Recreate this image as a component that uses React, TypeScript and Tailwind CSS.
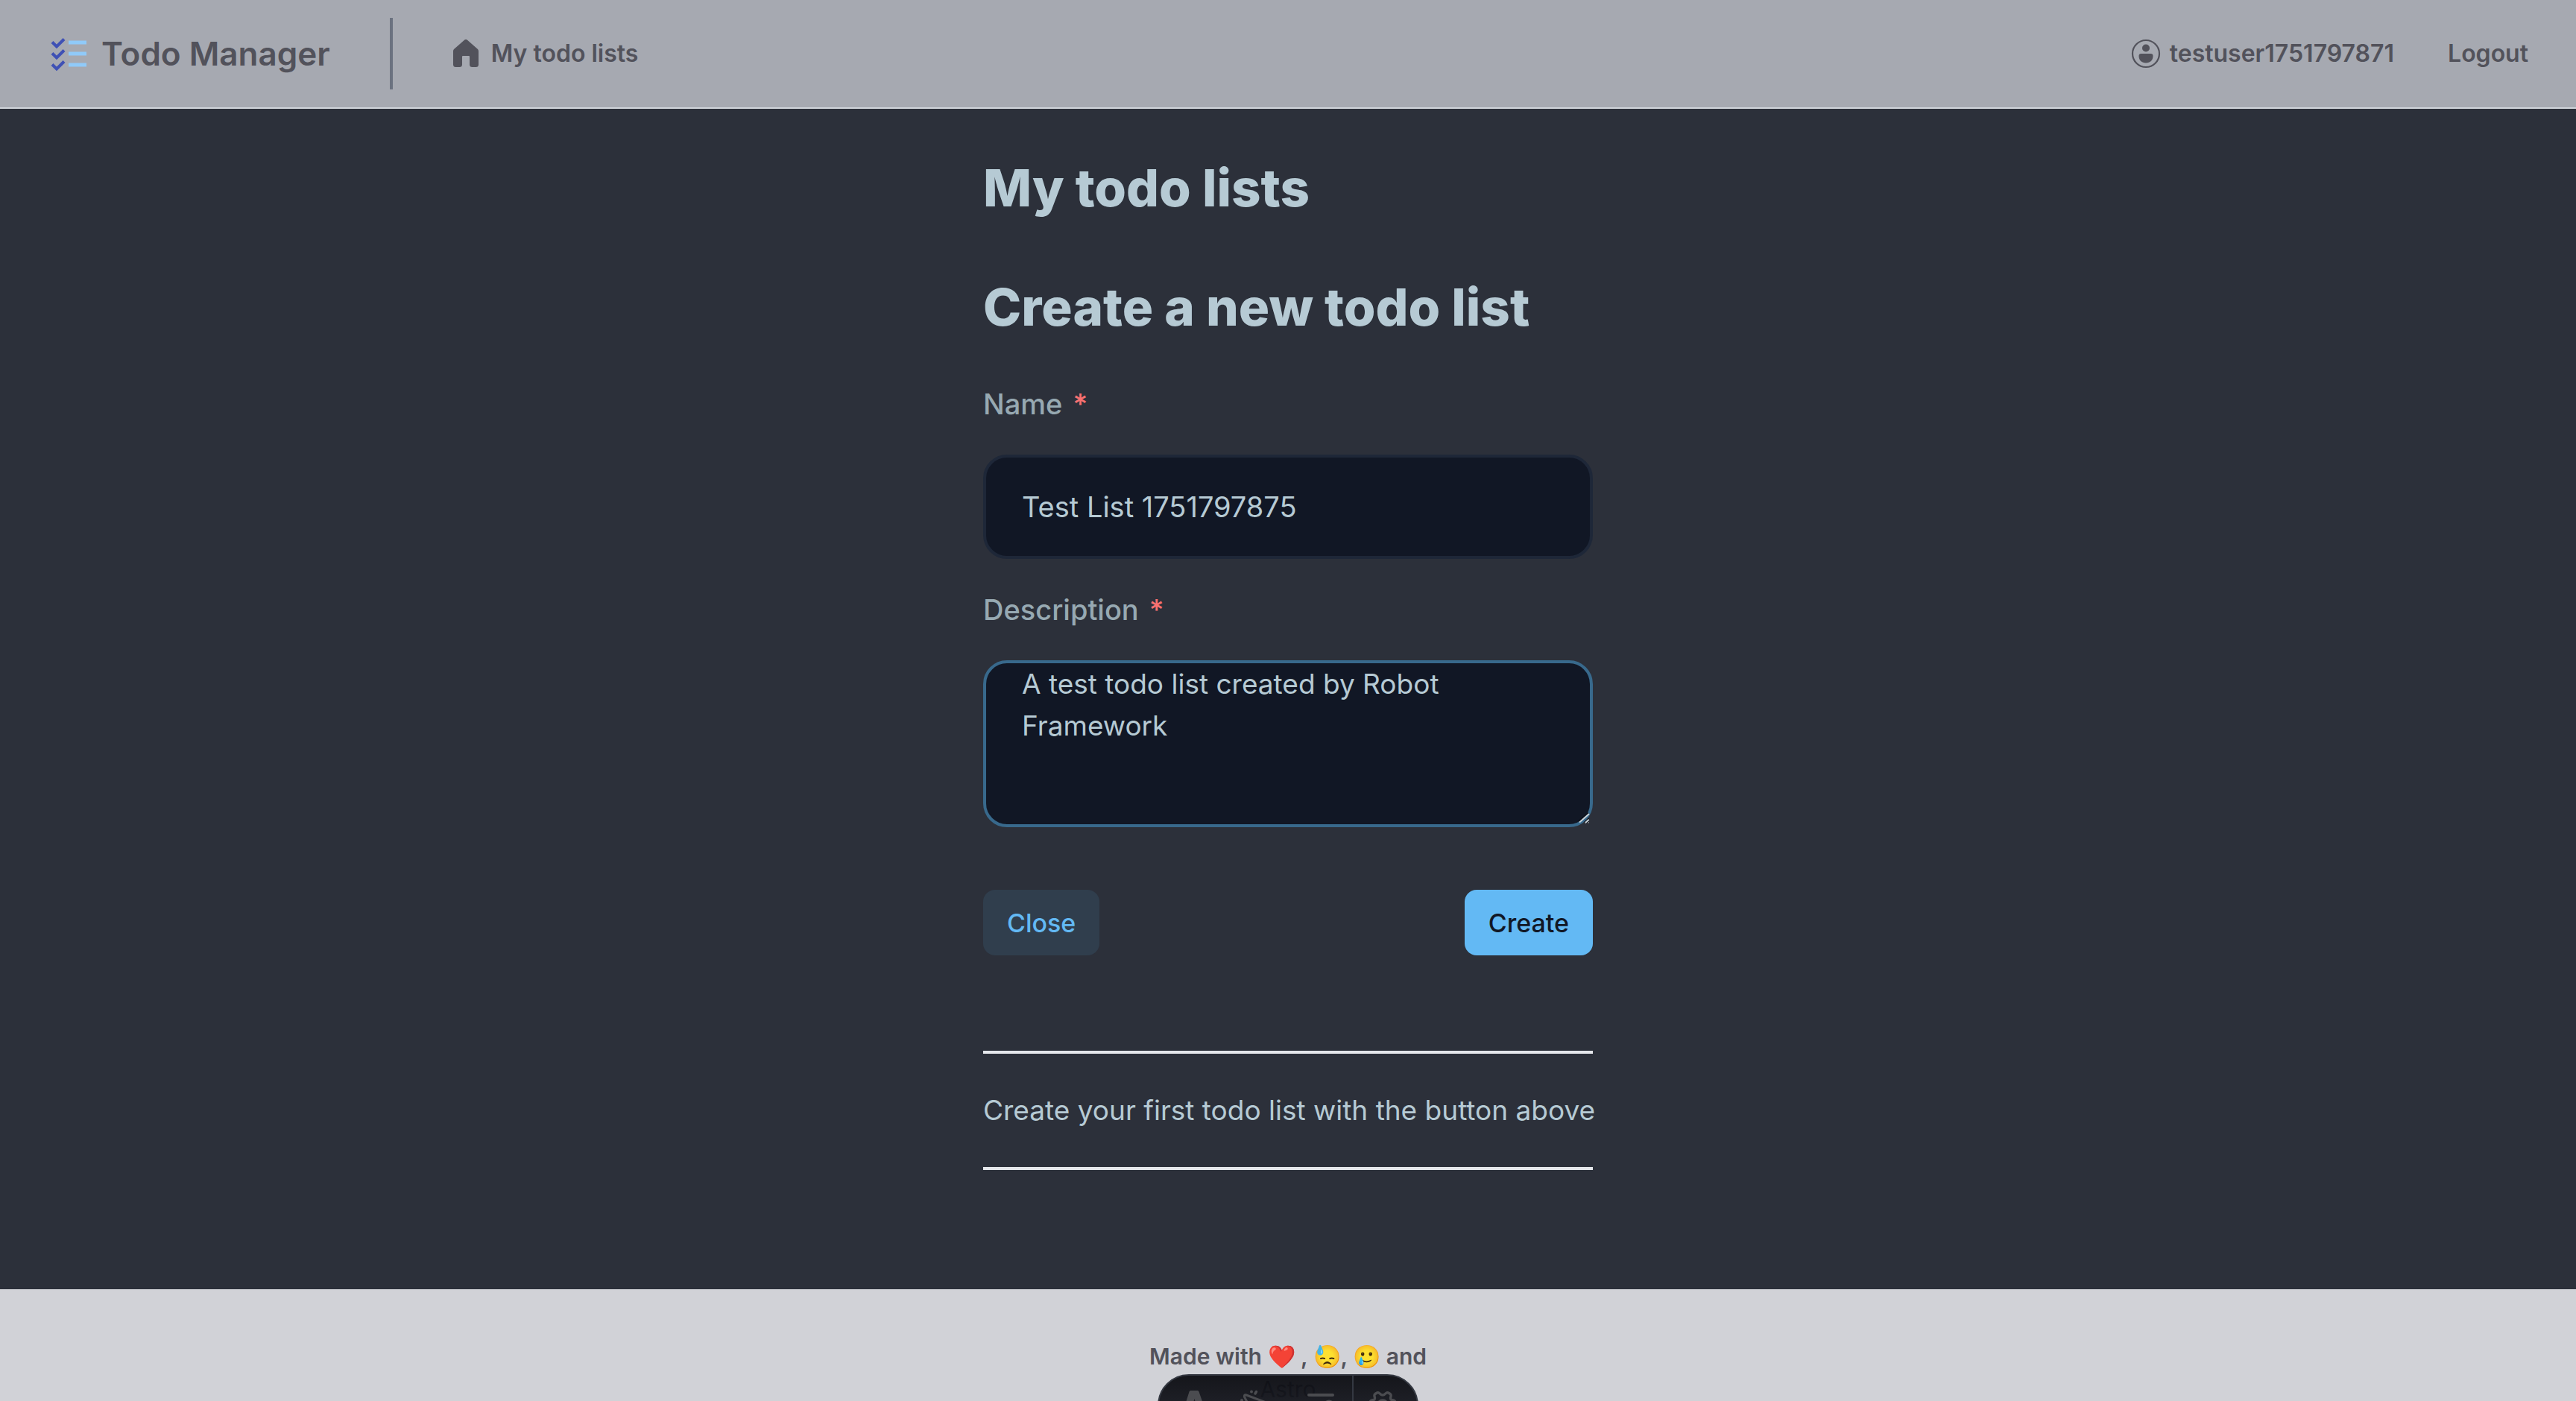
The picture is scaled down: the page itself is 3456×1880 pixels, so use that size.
import React from "react";

const inter = "font-['Inter',sans-serif]";

function LogoIcon() {
  return (
    <svg viewBox="0 0 48 48" className="size-12 shrink-0" aria-hidden="true" fill="none">
      <g stroke="#3f51b5" strokeWidth="4">
        <path d="M2 8.500l6 6L18 4.500" />
        <path d="M2 23.500l6 6 10-10" />
        <path d="M2 38.500l6 6 10-10" />
      </g>
      <path d="M24 9h24M24 24h24M24 39h24" stroke="#90caf9" strokeWidth="5" />
    </svg>
  );
}

function HomeIcon() {
  return (
    <svg viewBox="0 0 36 38" className="h-[38px] w-9 shrink-0" aria-hidden="true" fill="currentColor">
      <path d="M16 .8a3 3 0 0 1 4 0l13.700 12a4 4 0 0 1 1.300 3V33.500a3.500 3.500 0 0 1-3.500 3.500h-5a3.500 3.500 0 0 1-3.500-3.500V23a1 1 0 0 0-1-1h-8a1 1 0 0 0-1 1v10.500A3.500 3.500 0 0 1 9.500 37h-5A3.500 3.500 0 0 1 1 33.500V15.800a4 4 0 0 1 1.300-3z" />
    </svg>
  );
}

function UserIcon() {
  return (
    <svg viewBox="0 0 40 40" className="size-10 shrink-0" aria-hidden="true" fill="currentColor">
      <circle cx="20" cy="20" r="18" fill="none" stroke="currentColor" strokeWidth="2.200" />
      <circle cx="20" cy="12.500" r="5" />
      <path d="M13.500 20h13c2 0 3 1.200 3 3 0 6-4 9.500-9.500 9.500s-9.500-3.500-9.500-9.500c0-1.800 1-3 3-3z" />
    </svg>
  );
}

function ResizeGrip() {
  return (
    <svg
      viewBox="0 0 16 16"
      className="pointer-events-none absolute right-1 bottom-1 size-4"
      aria-hidden="true"
      fill="none"
    >
      <path d="M1 12L14 1M9 13.500l5-4.500" stroke="#0b0f18" strokeWidth="2" />
      <path d="M2 13.500L15 2M10 14l4.500-4" stroke="#c9d3da" strokeWidth="2" />
    </svg>
  );
}

function Toolbar() {
  return (
    <div className="pointer-events-none absolute inset-x-0 bottom-0 flex h-9 justify-center">
      <nav
        aria-label="Developer toolbar"
        className="pointer-events-auto flex h-21 w-[350px] rounded-[42px] border-2 border-[#343841] bg-linear-to-b from-[#0b0c11]/95 to-[#20222c]/95 pl-1 text-[#4b4c50]"
      >
        <button type="button" aria-label="Menu" className="flex w-[85px] items-center justify-center">
          <svg viewBox="0 0 40 40" className="size-10 shrink-0" fill="currentColor">
            <path d="M15.500 0h9a2 2 0 0 1 2 1.400L38 35a36 36 0 0 0-11-3L20.500 11 14 32a36 36 0 0 0-11 3L13.500 1.400a2 2 0 0 1 2-1.400z" />
          </svg>
        </button>
        <button type="button" aria-label="Inspect" className="flex w-[85px] items-center justify-center">
          <svg viewBox="0 0 40 40" className="size-10 shrink-0 overflow-visible" fill="currentColor">
            <path
              d="M5 6l28 10.500q2 1-.2 2L22 22.500l-4.500 11q-1 2-2 0L2.500 8.500Q2 5 5 6z"
              fill="none"
              stroke="currentColor"
              strokeWidth="3"
              strokeLinejoin="round"
            />
            <circle cx="12" cy="1.500" r="2" />
            <path d="M17 4l1.500-2.500" stroke="currentColor" strokeWidth="3.500" strokeLinecap="round" />
            <circle cx="-1" cy="13" r="2" />
          </svg>
        </button>
        <button type="button" aria-label="Audit" className="flex w-[85px] items-center justify-center">
          <svg viewBox="0 0 40 40" className="size-10 shrink-0" fill="currentColor">
            <rect x="2" y="4" width="36" height="4" rx="2" />
            <rect x="2" y="18" width="20" height="4" rx="2" />
            <rect x="2" y="32" width="20" height="4" rx="2" />
            <circle cx="31" cy="20" r="7.500" />
          </svg>
        </button>
        <button
          type="button"
          aria-label="Settings"
          className="flex w-20 items-center justify-center border-l-2 border-[#343841]"
        >
          <svg
            viewBox="0 0 40 40"
            className="size-10 shrink-0"
            fill="none"
            stroke="currentColor"
            strokeWidth="3.400"
            strokeLinejoin="round"
          >
            <path d="M11.500 3.500q2-1.500 4 0l2.500 2q2 1 4 0l2.500-2q2-1.500 4 0l1.500 1q1.500 1 1 3l-.5 2.500q0 2 1.500 2.500l2.500.5q2 .5 2.500 2.500v3q0 2-2 2.500l-1.500 1q-1.500 1-.5 3l1 2q1 2-.5 3.500l-2 2q-2 1-3.500 0L26 31q-2-1-2.500 1l-.5 2q-.5 2-3 2t-3-2l-.5-2q-.5-2-2.500-1l-2 1.500q-2 1-3.500 0l-2-2q-1.500-1.500-.5-3.500l1-2q1-2-.5-3l-1.500-1q-2-.5-2-2.500v-3q.5-2 2.500-2.500l2.500-.5q1.500-.5 1.500-2.500L9 7.500q-.5-2 1-3z" />
            <circle cx="20" cy="19.500" r="6.500" />
          </svg>
        </button>
      </nav>
    </div>
  );
}

export default function App() {
  return (
    <div className={`relative flex h-screen flex-col overflow-hidden bg-[#2c303a] ${inter}`}>
      <header className="flex h-[146px] shrink-0 items-center justify-between border-b-2 border-[#d1d5db] bg-[#a6a9b1] pr-16 pl-17 text-[32px] font-semibold text-[#52525b]">
        <div className="flex items-center">
          <a href="#" className="flex items-center gap-5 text-[44px]">
            <LogoIcon />
            Todo Manager
          </a>
          <div className="ml-20 h-24 w-1 bg-[#6b7280]" />
          <a href="#" className="ml-20 flex items-center gap-4">
            <HomeIcon />
            My todo lists
          </a>
        </div>
        <div className="flex items-center gap-18">
          <a href="#" className="flex items-center gap-3">
            <UserIcon />
            testuser1751797871
          </a>
          <button type="button">Logout</button>
        </div>
      </header>

      <main className="mx-auto w-[818px] grow pt-[66px] text-[#b6cad4]">
        <h1 className="text-[69px] leading-20 font-extrabold">My todo lists</h1>
        <h2 className="mt-20 text-[69px] leading-20 font-extrabold">Create a new todo list</h2>
        <form onSubmit={(e) => e.preventDefault()}>
          <label htmlFor="name" className="mt-[62px] block text-[38px] leading-14 font-medium text-[#97a9b2]">
            Name <span className="ml-1 text-[#f87171]">*</span>
          </label>
          <input
            id="name"
            defaultValue="Test List 1751797875"
            className="mt-10 block h-[140px] w-full rounded-[32px] border-4 border-[#1e2738] bg-[#111725] px-12 text-[38px]"
          />
          <label htmlFor="description" className="mt-10 block text-[38px] leading-14 font-medium text-[#97a9b2]">
            Description <span className="ml-1 text-[#f87171]">*</span>
          </label>
          <div className="relative mt-10">
            <textarea
              id="description"
              defaultValue="A test todo list created by Robot Framework"
              className="block h-[224px] w-full rounded-[32px] border-4 border-[#38698c] bg-[#111725] px-12 text-[37px] leading-14 outline-none"
            />
            <ResizeGrip />
          </div>
          <div className="mt-21 flex justify-between text-[34px] font-medium">
            <button type="button" className="h-[88px] rounded-2xl bg-[#303e4d] px-8 text-[#63b9f4]">
              Close
            </button>
            <button type="submit" className="h-[88px] rounded-2xl bg-[#63b9f4] px-8 text-[#111725]">
              Create
            </button>
          </div>
        </form>
        <p className="mt-32 border-y-4 border-[#e5e7eb] py-12 text-[37px] leading-14 whitespace-nowrap">
          Create your first todo list with the button above
        </p>
      </main>

      <footer className="flex h-[150px] shrink-0 flex-col items-center bg-[#d1d2d7] pt-[66px] text-[30px] text-[#52525b]">
        <p className="leading-12 font-semibold">Made with ❤️ , 😓, 🥲 and</p>
        <a href="#" className="mt-1 leading-8">
          Astro
        </a>
      </footer>
      <Toolbar />
    </div>
  );
}
